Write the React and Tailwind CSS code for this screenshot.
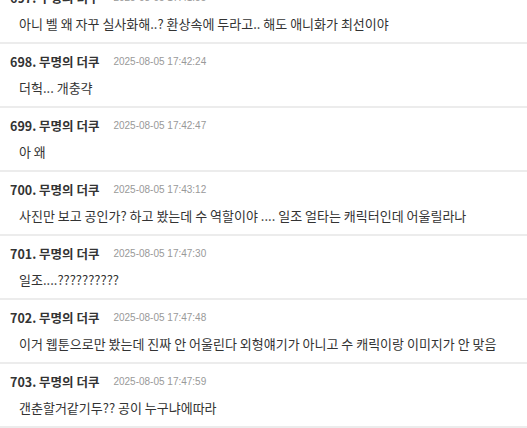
const posts = [
  { no: 697, time: '2025-08-05 17:41:55', text: '아니 벨 왜 자꾸 실사화해..? 환상속에 두라고.. 해도 애니화가 최선이야' },
  { no: 698, time: '2025-08-05 17:42:24', text: '더헉... 개충갹' },
  { no: 699, time: '2025-08-05 17:42:47', text: '아 왜' },
  { no: 700, time: '2025-08-05 17:43:12', text: '사진만 보고 공인가? 하고 봤는데 수 역할이야 .... 일조 얼타는 캐릭터인데 어울릴라나' },
  { no: 701, time: '2025-08-05 17:47:30', text: '일조....??????????' },
  { no: 702, time: '2025-08-05 17:47:48', text: '이거 웹툰으로만 봤는데 진짜 안 어울린다 외형얘기가 아니고 수 캐릭이랑 이미지가 안 맞음' },
  { no: 703, time: '2025-08-05 17:47:59', text: '갠춘할거같기두?? 공이 누구냐에따라' },
]

function Post({ post }) {
  return (
    <div className="h-[64px] border-b-2 border-[#ececec] pt-[10px]">
      <div className="flex h-[15px] items-center overflow-visible pl-[10px] leading-[15px]">
        <span className="text-[12.5px] font-bold text-[#333]">{post.no}. 무명의 더쿠</span>
        <span className="ml-[14px] text-[10px] text-[#999] font-['Liberation_Sans',sans-serif]">{post.time}</span>
      </div>
      <div className="mt-[10px] h-[17px] pl-[19px] text-[13px] leading-[17px] text-[#333] whitespace-nowrap">
        {post.text}
      </div>
    </div>
  )
}

export default function App() {
  return (
    <div className="h-[428px] w-[527px] overflow-hidden bg-white font-['Noto_Sans_CJK_KR',sans-serif]">
      <div className="-mt-[20px]">
        {posts.map((post) => (
          <Post key={post.no} post={post} />
        ))}
      </div>
    </div>
  )
}
